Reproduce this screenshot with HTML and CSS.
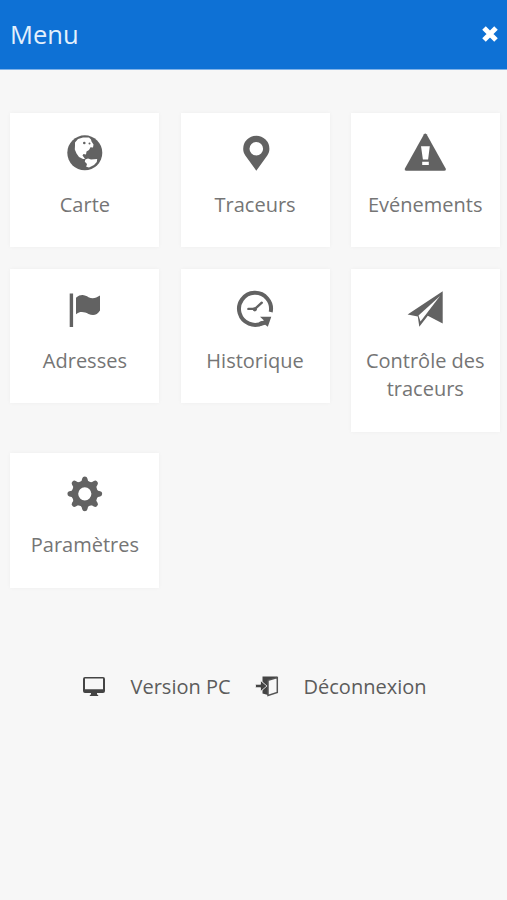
FILE: index.html
```html
<!DOCTYPE html>
<html lang="fr">
<head>
    <meta charset="UTF-8">
    <meta name="viewport" content="width=device-width, initial-scale=1.0">
    <title>Menu</title>
    <link rel="stylesheet" href="styles.css">
</head>
<body>
    <header class="header">
        <h1>Menu</h1>
        <button class="close" aria-label="Fermer">
            <svg width="18" height="18" viewBox="0 0 18 18"><path d="M3 3L15 15M15 3L3 15"/></svg>
        </button>
    </header>

    <nav class="menu">
        <a class="card" href="#">
            <svg class="icon" viewBox="0 0 44 42">
                <circle cx="21.8" cy="20.8" r="17.5"/>
                <path class="cut" d="M12 10.5L15 7 20 5.4 26 5.4 28 7.5 28.5 9.5 30.5 12.5 30 15.5 27.5 15.3 26 18 23.5 19.500 23 22.500 20.500 22 19.500 23.500 21 25.500 22 27 20 27 16 25 13.500 21.500 11.800 17.500 12 13.500z"/>
                <path class="cut" d="M22.3 27.5L25 26.4 28 27.4 34.2 27 33.8 30 31 33 26 35.4 23.2 34.8 24 32 21.8 29.8z"/>
                <circle cx="21.3" cy="11" r="1.3"/>
                <circle cx="26.500" cy="11.500" r="1"/>
            </svg>
            <span>Carte</span>
        </a>
        <a class="card" href="#">
            <svg class="icon" viewBox="0 0 44 42">
                <path fill-rule="evenodd" d="M23.3 38.7L12.3 23.5C10.8 21.4 10.2 19.3 10.2 16.8a13.1 13.1 0 0 1 26.2 0c0 2.5-.6 4.6-2.1 6.7zM23.3 9.9a6.8 6.8 0 1 0 0 13.6a6.8 6.8 0 1 0 0-13.6z"/>
            </svg>
            <span>Traceurs</span>
        </a>
        <a class="card" href="#">
            <svg class="icon" viewBox="0 0 44 42">
                <path d="M21 2.2q1.3-1.6 2.6 0L42.8 36.8q.6 1.9-1.4 1.9H3.2q-2 0-1.4-1.9z"/>
                <path class="cut" d="M18 14.3h8.8L25.1 27.4h-5.2zM19.2 29.8h6.6v3.2h-6.6z"/>
            </svg>
            <span>Evénements</span>
        </a>
        <a class="card" href="#">
            <svg class="icon" viewBox="0 0 44 42">
                <path d="M6.7 5.5h3.4V39H6.7zM13 9.8C18 5.5 22 7.2 25.5 9.2C29.5 11.3 33 10.2 37 7.6V22.5C34 27.5 30 27.8 25.5 26C21 23.6 17 23.2 13 26.2z"/>
            </svg>
            <span>Adresses</span>
        </a>
        <a class="card" href="#">
            <svg class="icon" viewBox="0 0 44 42">
                <path class="line" stroke-width="4" d="M37.7 24A16 16 0 1 0 30 34.7"/>
                <path d="M27 28.7h11.3L34.8 38.7 32.2 36.7 28 37.7 26 34 31 32.5z"/>
                <path class="line" stroke-width="2.4" stroke-linecap="round" d="M15.4 20.9h6.6L28.8 14.7"/>
                <circle cx="21.8" cy="21.3" r="2.1"/>
            </svg>
            <span>Historique</span>
        </a>
        <a class="card" href="#">
            <svg class="icon" viewBox="0 0 44 42">
                <path d="M39.7 3.3L4.6 26.4 14.8 28.6 16.3 38.8 24.8 27.8 39.7 35.5z"/>
                <path class="cut" d="M37 8L15.5 27.6 17.5 33.5z"/>
            </svg>
            <span>Contrôle des traceurs</span>
        </a>
        <a class="card" href="#">
            <svg class="icon" viewBox="0 0 44 42">
                <g transform="translate(21.8 20.8)">
                    <circle class="line" stroke-width="6.4" r="9.8"/>
                    <g id="teeth">
                        <path id="tooth" d="M-4.6-11.5Q-2.8-13-2.6-15.4Q-2.2-17.4 0-17.4T2.6-15.4Q2.8-13 4.6-11.5z"/>
                        <use href="#tooth" transform="rotate(45)"/>
                        <use href="#tooth" transform="rotate(90)"/>
                        <use href="#tooth" transform="rotate(135)"/>
                    </g>
                    <use href="#teeth" transform="rotate(180)"/>
                </g>
            </svg>
            <span>Paramètres</span>
        </a>
    </nav>

    <footer class="footer">
        <a class="link" href="#">
            <svg width="24" height="22" viewBox="0 0 24 22">
                <path fill-rule="evenodd" d="M3 1h18q2 0 2 2v12q0 2-2 2h-6v1.5l1.2.5v1H7.8v-1l1.2-.5V17H3q-2 0-2-2V3q0-2 2-2zM3 2.6v10.6h18V2.6z"/>
            </svg>
            <span>Version PC</span>
        </a>
        <a class="link" href="#">
            <svg width="24" height="22" viewBox="0 0 24 22">
                <path d="M7.5.5H22V3L13 5V19L7.5 17.5V14L11 10 7.5 6z"/>
                <path class="panel" d="M13 4.200L22.300 1.500V16.500L13 19.400z"/>
                <path class="arrow" d="M.5 8.300H5.500V4.500L12 10 5.500 15.500V11.700H.5z"/>
            </svg>
            <span>Déconnexion</span>
        </a>
    </footer>
</body>
</html>
```

FILE: styles.css
```css
*{
    box-sizing: border-box;
}

body {
    margin: 0;
    min-height: 100vh;
    background-color: #f7f7f7;
    font-family: "Open Sans", Arial, sans-serif;
    font-size: 20px;
}

a {
    color: inherit;
    text-decoration: none;
}

.header {
    display: flex;
    align-items: center;
    justify-content: space-between;
    height: 70px;
    padding: 0 8px 1px 10px;
    background-color: #0e71d5;
    border-bottom: 1px solid #7fb2e8;
    color: #e3f0fc;
}
.header h1 {
    margin: 0;
    font-size: 25.5px;
    font-weight: normal;
}

.close {
    display: flex;
    padding: 0 0 1px;
    border: none;
    background: none;
}
.close path {
    stroke: white;
    stroke-width: 5;
}

.menu {
    display: grid;
    grid-template-columns: repeat(3, 149px);
    align-items: start;
    gap: 21.5px 21.2px;
    padding: 42.5px 0 0 10.4px;
}

.card {
    display: flex;
    flex-direction: column;
    align-items: center;
    padding: 19.5px 5px 28px;
    background-color: white;
    box-shadow: 0 0 4px rgba(0, 0, 0, 0.04);
    color: #757575;
    line-height: 28.5px;
    text-align: center;
}

.icon {
    width: 44px;
    height: 42px;
    margin-bottom: 16.5px;
    fill: #626262;
}
.icon .cut {
    fill: white;
}
.icon .line {
    fill: none;
    stroke: #626262;
}

.footer {
    display: flex;
    justify-content: center;
    gap: 24px;
    margin-top: 85.5px;
    padding-left: 1px;
    color: #5c5c5c;
    line-height: 28px;
}

.link {
    display: flex;
    align-items: center;
    gap: 25px;
}
.link svg {
    fill: #444;
}
.link .panel {
    fill: #f7f7f7;
    stroke: #555;
    stroke-width: 1.5;
}
.link .arrow {
    stroke: #f7f7f7;
    stroke-width: 0.8;
}
```
